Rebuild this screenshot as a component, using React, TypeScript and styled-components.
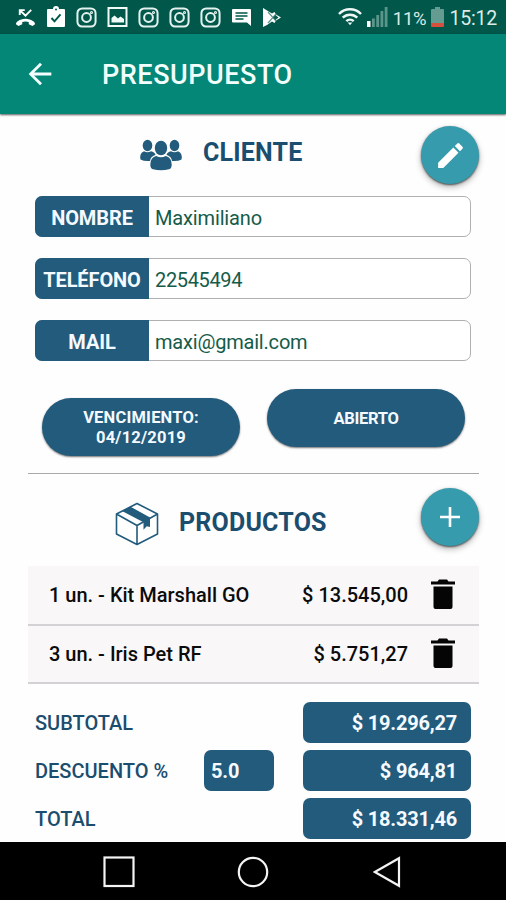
import React from "react";
import styled, { createGlobalStyle } from "styled-components";
import { MdArrowBack, MdEdit } from "react-icons/md";

const GlobalStyle = createGlobalStyle`
  * { box-sizing: border-box; }
  body { margin: 0; background: #fefefe; font-family: Roboto, sans-serif; }
  svg { display: block; flex: none; }
`;

const navy = "#225b7c";
const ink = "#1b4d6e";

const Screen = styled.div`
  width: 506px;
  height: 900px;
  display: flex;
  flex-direction: column;
  background: #fefefe;
  overflow: hidden;
`;

const StatusBar = styled.div`
  height: 34px;
  flex: none;
  display: flex;
  align-items: center;
  justify-content: space-between;
  padding: 0 9px 0 15px;
  background: #00574a;
  color: #dcebe7;
`;

const Notifications = styled.div`
  display: flex;
  align-items: center;
  gap: 10px;
`;

const SystemInfo = styled.div`
  display: flex;
  align-items: center;
  gap: 5px;
`;

const StatusText = styled.span<{ $size: number; $spacing?: number }>`
  font-size: ${(p) => p.$size}px;
  line-height: 34px;
  padding-top: 3px;
  letter-spacing: ${(p) => p.$spacing ?? 0}px;
  white-space: nowrap;
`;

const AppBar = styled.header`
  height: 80px;
  flex: none;
  display: flex;
  align-items: center;
  gap: 45px;
  padding-left: 23px;
  background: #048777;
  color: #f2fffd;
  box-shadow: 0 1px 2px rgba(0, 0, 0, 0.65);
  z-index: 1;
`;

const AppTitle = styled.h1`
  margin: 2px 0 0;
  font-size: 27px;
  font-weight: 500;
  letter-spacing: 0.55px;
`;

const Content = styled.main`
  flex: 1;
  min-height: 0;
  overflow: hidden;
  padding: 0 27px 0 28px;
`;

const SectionHead = styled.div<{ $height: number; $left: number; $gap: number; $top: number }>`
  height: ${(p) => p.$height}px;
  display: flex;
  align-items: flex-start;
  gap: ${(p) => p.$gap}px;
  padding: ${(p) => p.$top}px 0 0 ${(p) => p.$left}px;
`;

const SectionIcon = styled.div<{ $top: number }>`
  margin-top: ${(p) => p.$top}px;
`;

const SectionTitle = styled.h2<{ $top: number; $spacing: number }>`
  margin: ${(p) => p.$top}px 0 0;
  color: ${ink};
  font-size: 25px;
  line-height: 30px;
  font-weight: 700;
  letter-spacing: ${(p) => p.$spacing}px;
`;

const RoundButton = styled.button`
  width: 58px;
  height: 58px;
  margin-left: auto;
  border: 0;
  border-radius: 50%;
  padding: 0;
  display: grid;
  place-items: center;
  background: #369bad;
  color: #fff;
  box-shadow: 0 1px 2px rgba(0, 0, 0, 0.6), 0 3px 6px rgba(0, 0, 0, 0.3);
`;

const Fields = styled.div`
  display: flex;
  flex-direction: column;
  gap: 21px;
  padding: 0 8px 0 7px;
`;

const Field = styled.label`
  height: 41px;
  display: flex;
  border: 1.5px solid #b0b0b2;
  border-radius: 7px;
  background: #fff;
`;

const FieldLabel = styled.span`
  width: 114px;
  margin: -1px 0 -1px -1px;
  border-radius: 7px 0 0 7px;
  background: ${navy};
  color: #f4faff;
  font-size: 20px;
  font-weight: 700;
  line-height: 44px;
  text-align: center;
  letter-spacing: -0.1px;
`;

const FieldValue = styled.span<{ $spacing: number }>`
  padding-left: 6px;
  color: #155b4a;
  font-size: 20px;
  line-height: 42px;
  letter-spacing: ${(p) => p.$spacing}px;
`;

const Actions = styled.div`
  height: 113px;
  display: flex;
  align-items: flex-start;
  gap: 27px;
  padding: 28px 13px 0 14px;
  border-bottom: 1.5px solid #a9a9ab;
`;

const Pill = styled.button<{ $drop?: number; $spacing?: number }>`
  width: 198px;
  height: 58px;
  flex: none;
  margin: ${(p) => p.$drop ?? 0}px 0 0;
  padding: 2px 0 0;
  border: 0;
  border-radius: 29px;
  background: ${navy};
  color: #f4faff;
  font: 700 16.5px/20px Roboto, sans-serif;
  letter-spacing: ${(p) => p.$spacing ?? 0}px;
  box-shadow: 0 1px 2px rgba(0, 0, 0, 0.55);
`;

const ProductRow = styled.div<{ $height: number }>`
  height: ${(p) => p.$height}px;
  display: flex;
  align-items: center;
  padding: 0 24px 1px 21px;
  background: #f9f7f8;
  border-bottom: 2px solid #d3d1d3;
  color: #0b0b0c;
  font-size: 20px;
  font-weight: 500;
`;

const ProductName = styled.span`
  flex: 1;
`;

const ProductPrice = styled.span`
  margin-right: 23px;
`;

const Totals = styled.div`
  display: flex;
  flex-direction: column;
  gap: 7px;
  padding: 18px 8px 0 7px;
`;

const TotalRow = styled.div`
  display: grid;
  grid-template-columns: 169px 99px 168px;
  align-items: center;
  color: ${ink};
  font-size: 20px;
  font-weight: 500;
`;

const Amount = styled.span<{ $input?: boolean }>`
  grid-column: ${(p) => (p.$input ? 2 : 3)};
  width: ${(p) => (p.$input ? "70px" : "168px")};
  height: 41px;
  padding: 0 ${(p) => (p.$input ? 7 : 14)}px;
  border-radius: 7px;
  background: ${navy};
  color: #f4faff;
  font-weight: 700;
  line-height: 42px;
  letter-spacing: -0.2px;
  text-align: ${(p) => (p.$input ? "left" : "right")};
`;

const NavBar = styled.nav`
  height: 58px;
  flex: none;
  display: flex;
  align-items: center;
  padding: 2px 0 0 102px;
  background: #000;
`;

const NavButton = styled.span<{ $width: number }>`
  width: ${(p) => p.$width}px;
`;

const MissedCallIcon = () => (
  <svg width="21" height="21" viewBox="0 0 22 22">
    <path d="M1 18c0-1.200.6-2.200 1.500-2.900C5 13.200 8 12.300 11 12.300s6 .9 8.500 2.800c.9.700 1.500 1.700 1.500 2.900l-2.600 2-4-2v-2.200c-2.200-.7-4.600-.7-6.800 0V18l-4 2z" fill="#fff" />
    <path d="M5 8.500V3.300H10.200M5.700 4l5.300 5 6-6" fill="none" stroke="#fff" strokeWidth="2" />
  </svg>
);

const ClipboardIcon = () => (
  <svg width="20" height="22" viewBox="0 0 20 22">
    <path d="M2 3h5a3 3 0 0 1 6 0h5q1 0 1 1v16q0 1-1 1H2q-1 0-1-1V4q0-1 1-1z" fill="#fff" />
    <circle cx="10" cy="3.500" r="1" fill="#00574a" />
    <path d="m5.500 12 3 3.300 6-7" fill="none" stroke="#00574a" strokeWidth="2" />
  </svg>
);

const CameraIcon = () => (
  <svg width="21" height="21" viewBox="0 0 22 22" fill="none" stroke="#e3f2ee" strokeWidth="2.100">
    <rect x="1.500" y="1.500" width="19" height="19" rx="5" />
    <circle cx="11" cy="11" r="4.600" />
    <circle cx="16.200" cy="5.800" r=".6" />
  </svg>
);

const PictureIcon = () => (
  <svg width="21" height="20" viewBox="0 0 21 20">
    <rect x="1.500" y="1" width="18" height="18" fill="none" stroke="#f2faf8" strokeWidth="2" />
    <path d="M4.500 15.500V11L7.500 8.500l3.500 3 2.500-2 3.500 2.500v3.500z" fill="#f2faf8" />
  </svg>
);

const MessageIcon = () => (
  <svg width="21" height="19" viewBox="0 0 21 19">
    <path d="M2 1h17q1 0 1 1v16l-4-3.500H2q-1 0-1-1V2q0-1 1-1z" fill="#fff" />
    <path d="M4.500 5h12M4.500 8h12M4.500 11h8" stroke="#00574a" strokeWidth="1.400" />
  </svg>
);

const PlayIcon = () => (
  <svg width="20" height="21" viewBox="0 0 20 21">
    <path d="M1 1v19l4-2 5-3.500 2.500 1.500 1.500-2.500 5-3-5-3-1.500-2.500L10 6.500z" fill="#fff" />
    <path d="m6 5 8 9M6 16l8-9" stroke="#5d968b" strokeWidth="1.200" />
    <path d="m11 10.500 2.500-2.500 3 2.500-3 2.500z" fill="#0a5b4e" />
  </svg>
);

const WifiIcon = () => (
  <svg width="24" height="18" viewBox="0 0 24 18" fill="none" stroke="#edf7f4" strokeWidth="2.500">
    <path d="M1 6C7-.2 17-.2 23 6M4.700 9.700c4-4 10.600-4 14.600 0M8.300 13.200c2.100-2 5.300-2 7.400 0" />
    <path d="m9.700 14.500 2.300 2.700 2.300-2.700z" fill="#edf7f4" stroke="none" />
  </svg>
);

const SignalIcon = () => (
  <svg width="21" height="20" viewBox="0 0 21 20">
    <path d="M0 14h3.500v6H0z" fill="#fff" />
    <path d="M5 11.500h2.800V20H5zM9.300 8h2.800v12H9.300zM13.500 4h2.800v16h-2.800zM17.700 0h2.800v20h-2.800z" fill="#5c968b" />
  </svg>
);

const BatteryIcon = () => (
  <svg width="13" height="20" viewBox="0 0 13 20">
    <path d="M4 0h5v2h3q1 0 1 1v14H0V3q0-1 1-1h3z" fill="#659c91" />
    <path d="M0 16h13v3q0 1-1 1H1q-1 0-1-1z" fill="#d6503b" />
  </svg>
);

const PeopleIcon = () => (
  <svg width="44" height="32" viewBox="0 0 44 32" fill={navy}>
    <ellipse cx="8.500" cy="6.500" rx="4.800" ry="5.700" />
    <ellipse cx="35.500" cy="6.500" rx="4.800" ry="5.700" />
    <path d="M5 12.200q3.500 2.200 7 0 3.500.5 4.500 3.500-5.200 2-5.500 6.300-6 .5-9.500-1.500Q.2 14 5 12.200zM39 12.200q-3.500 2.200-7 0-3.500.5-4.500 3.500 5.200 2 5.500 6.300 6 .5 9.500-1.500Q43.800 14 39 12.200z" />
    <ellipse cx="22" cy="9" rx="6.200" ry="7.300" />
    <path d="M17.300 17q4.700 2.600 9.400 0 5.800 1 6 8.500 0 4-2.700 4.800-8 1.800-16 0-2.700-.8-2.700-4.800.2-7.500 6-8.500z" />
  </svg>
);

const BoxIcon = () => (
  <svg width="44" height="44" viewBox="0 0 44 44">
    <path d="M22 1.500 42.500 12v20L22 42.500 1.500 32V12zM1.500 12 22 23.500 42.500 12M22 23.500v19" fill="#fff" stroke={navy} strokeWidth="1.600" strokeLinejoin="round" />
    <path d="m7 9 8.500-4.300L35 15.500V25l-3.300-.8-3.200 3.500v-7.500z" fill={navy} />
  </svg>
);

const PlusIcon = () => (
  <svg width="22" height="22" viewBox="0 0 22 22">
    <path d="M11 1v20M1 11h20" stroke="#fff" strokeWidth="2.600" />
  </svg>
);

const TrashIcon = () => (
  <svg width="24" height="31" viewBox="0 0 24 31">
    <path d="M0 2.500h6.500L8 .5h8l1.500 2H24v3H0zM2.500 7.500h19v20.500q0 2-2 2h-15q-2 0-2-2z" fill="#050505" />
  </svg>
);

const RecentIcon = () => (
  <svg width="33" height="32" viewBox="0 0 33 32">
    <rect x="2.500" y="1.500" width="29" height="28.500" fill="none" stroke="#f4f4f4" strokeWidth="2.200" />
  </svg>
);

const HomeIcon = () => (
  <svg width="32" height="32" viewBox="0 0 32 32">
    <circle cx="16" cy="16" r="14.200" fill="none" stroke="#f4f4f4" strokeWidth="2.200" />
  </svg>
);

const BackIcon = () => (
  <svg width="28" height="32" viewBox="0 0 28 32">
    <path d="M26 2.200v27.600L1.800 16z" fill="none" stroke="#f4f4f4" strokeWidth="2.200" />
  </svg>
);

const fields = [
  { label: "NOMBRE", value: "Maximiliano", valueSpacing: -0.15 },
  { label: "TELÉFONO", value: "22545494", valueSpacing: -0.35 },
  { label: "MAIL", value: "maxi@gmail.com", valueSpacing: -0.2 },
];

const products = [
  { name: "1 un. - Kit Marshall GO", price: "$ 13.545,00", height: 60 },
  { name: "3 un. - Iris Pet RF", price: "$ 5.751,27", height: 58 },
];

export default function App() {
  return (
    <Screen>
      <GlobalStyle />
      <StatusBar>
        <Notifications>
          <MissedCallIcon />
          <ClipboardIcon />
          <CameraIcon />
          <PictureIcon />
          <CameraIcon />
          <CameraIcon />
          <CameraIcon />
          <MessageIcon />
          <PlayIcon />
        </Notifications>
        <SystemInfo>
          <WifiIcon />
          <SignalIcon />
          <StatusText $size={18.5} $spacing={-0.2}>11%</StatusText>
          <BatteryIcon />
          <StatusText $size={19.5} $spacing={-0.2}>15:12</StatusText>
        </SystemInfo>
      </StatusBar>
      <AppBar>
        <MdArrowBack size={34} />
        <AppTitle>PRESUPUESTO</AppTitle>
      </AppBar>
      <Content>
        <SectionHead $height={82} $left={111} $gap={20} $top={12}>
          <SectionIcon $top={13}><PeopleIcon /></SectionIcon>
          <SectionTitle $top={12} $spacing={0.2}>CLIENTE</SectionTitle>
          <RoundButton aria-label="Editar cliente"><MdEdit size={33} /></RoundButton>
        </SectionHead>
        <Fields>
          {fields.map((f) => (
            <Field key={f.label}>
              <FieldLabel>{f.label}</FieldLabel>
              <FieldValue $spacing={f.valueSpacing}>{f.value}</FieldValue>
            </Field>
          ))}
        </Fields>
        <Actions>
          <Pill $drop={9} $spacing={0.2}>VENCIMIENTO:<br />04/12/2019</Pill>
          <Pill $spacing={-0.3}>ABIERTO</Pill>
        </Actions>
        <SectionHead $height={92} $left={87} $gap={20} $top={14}>
          <SectionIcon $top={14}><BoxIcon /></SectionIcon>
          <SectionTitle $top={20} $spacing={0.2}>PRODUCTOS</SectionTitle>
          <RoundButton aria-label="Agregar producto"><PlusIcon /></RoundButton>
        </SectionHead>
        {products.map((p) => (
          <ProductRow key={p.name} $height={p.height}>
            <ProductName>{p.name}</ProductName>
            <ProductPrice>{p.price}</ProductPrice>
            <TrashIcon />
          </ProductRow>
        ))}
        <Totals>
          <TotalRow><span>SUBTOTAL</span><Amount>$ 19.296,27</Amount></TotalRow>
          <TotalRow><span>DESCUENTO %</span><Amount $input>5.0</Amount><Amount>$ 964,81</Amount></TotalRow>
          <TotalRow><span>TOTAL</span><Amount>$ 18.331,46</Amount></TotalRow>
        </Totals>
      </Content>
      <NavBar>
        <NavButton $width={135}><RecentIcon /></NavButton>
        <NavButton $width={136}><HomeIcon /></NavButton>
        <NavButton $width={28}><BackIcon /></NavButton>
      </NavBar>
    </Screen>
  );
}
